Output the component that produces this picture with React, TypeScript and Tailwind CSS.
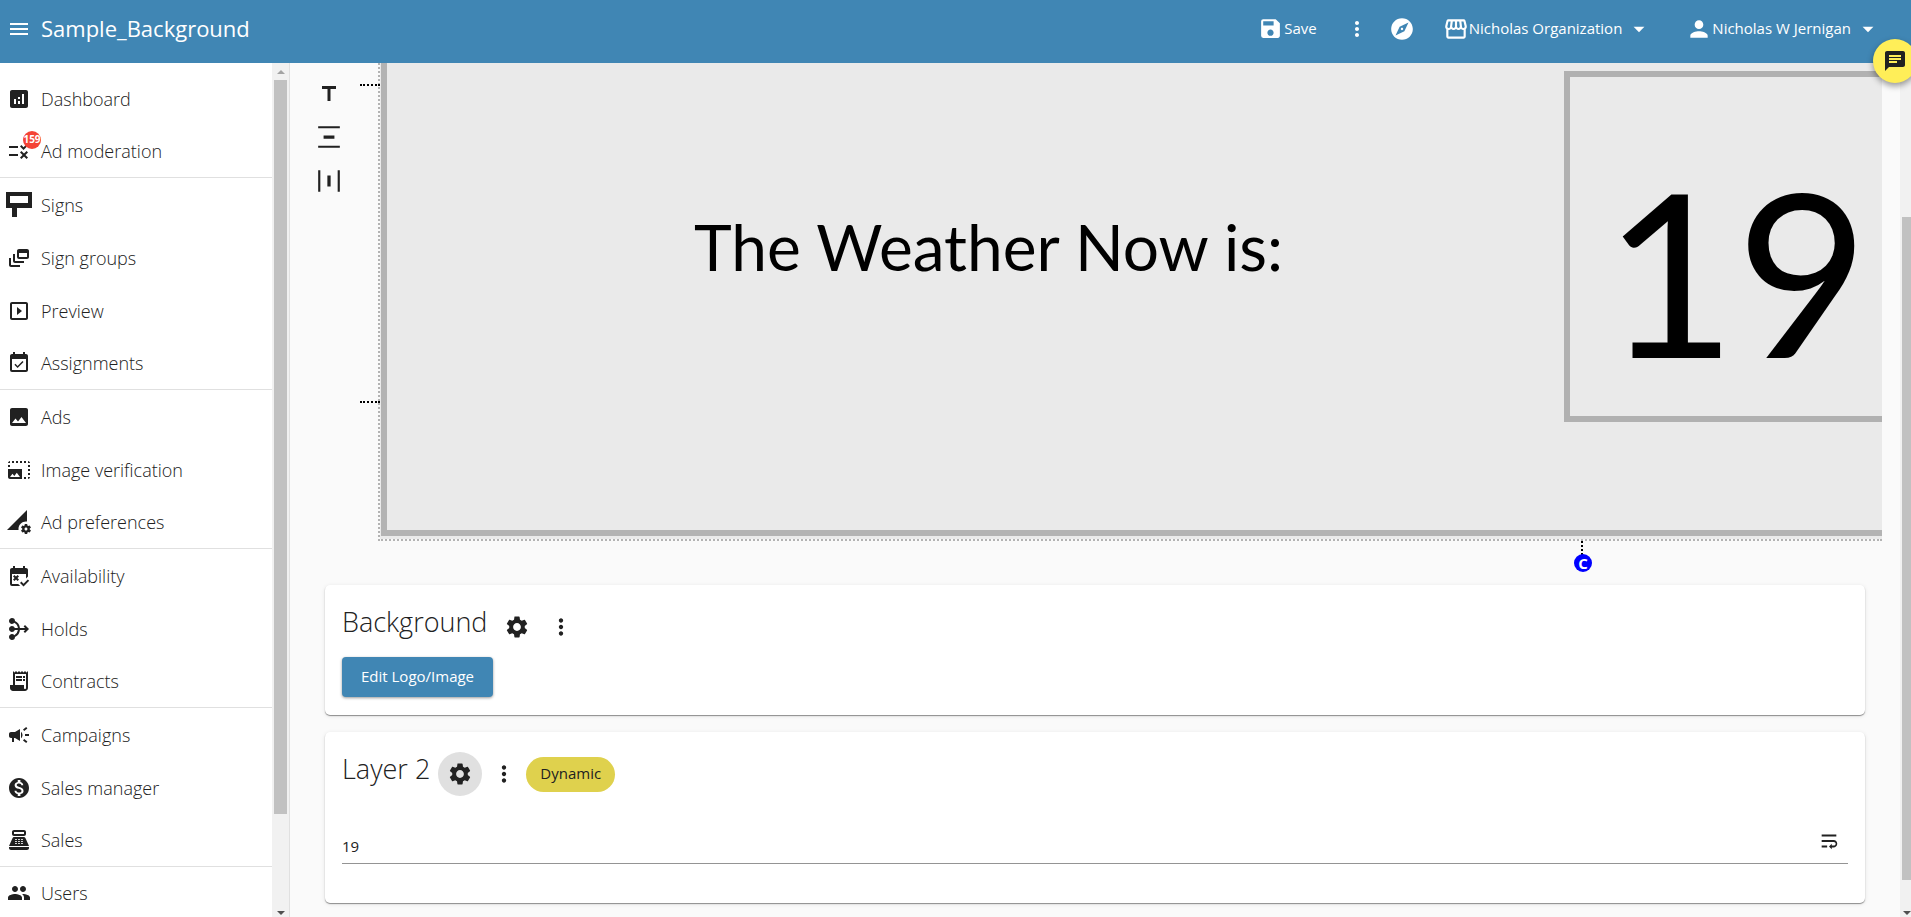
import React from "react";
import type { IconType } from "react-icons";
import {
	MdAnalytics,
	MdArrowDropDown,
	MdCampaign,
	MdChat,
	MdDynamicFeed,
	MdEventAvailable,
	MdExplore,
	MdFreeCancellation,
	MdHorizontalDistribute,
	MdImage,
	MdMediation,
	MdMenu,
	MdMonetizationOn,
	MdMoreVert,
	MdPeople,
	MdPermDataSetting,
	MdPerson,
	MdPhotoSizeSelectLarge,
	MdPointOfSale,
	MdReceiptLong,
	MdRule,
	MdSave,
	MdSettings,
	MdSlideshow,
	MdStorefront,
	MdTitle,
	MdVerticalDistribute,
	MdWrapText,
} from "react-icons/md";

interface NavItem {
	label: string;
	icon: IconType | typeof SignIcon;
	badge?: string;
}

function SignIcon({ size = 26 }: { size?: number }) {
	return (
		<svg width={size} height={size} viewBox="0 0 26 26" aria-hidden="true">
			<path d="M0 0h26v16H11v9H6v-9H0zM4 4v7h18V4z" fill="currentColor" fillRule="evenodd" />
		</svg>
	);
}

const NAV_GROUPS: NavItem[][] = [
	[
		{ label: "Dashboard", icon: MdAnalytics },
		{ label: "Ad moderation", icon: MdRule, badge: "159" },
	],
	[
		{ label: "Signs", icon: SignIcon },
		{ label: "Sign groups", icon: MdDynamicFeed },
		{ label: "Preview", icon: MdSlideshow },
		{ label: "Assignments", icon: MdEventAvailable },
	],
	[
		{ label: "Ads", icon: MdImage },
		{ label: "Image verification", icon: MdPhotoSizeSelectLarge },
		{ label: "Ad preferences", icon: MdPermDataSetting },
	],
	[
		{ label: "Availability", icon: MdFreeCancellation },
		{ label: "Holds", icon: MdMediation },
		{ label: "Contracts", icon: MdReceiptLong },
	],
	[
		{ label: "Campaigns", icon: MdCampaign },
		{ label: "Sales manager", icon: MdMonetizationOn },
		{ label: "Sales", icon: MdPointOfSale },
	],
	[{ label: "Users", icon: MdPeople }],
];

function Header() {
	return (
		<header className="flex h-[63px] shrink-0 items-center bg-[#4086b4] pr-[30px] pb-[6px] pl-[7px] text-[15px] text-white">
			<button type="button" aria-label="Menu" className="mr-[10px]">
				<MdMenu size={24} />
			</button>
			<h1 className="text-[22px]">Sample_Background</h1>
			<div className="ml-auto flex items-center">
				<button type="button" className="mr-7 flex items-center gap-px">
					<MdSave size={25} />
					Save
				</button>
				<button type="button" aria-label="More actions" className="mr-5">
					<MdMoreVert size={24} />
				</button>
				<button type="button" aria-label="Explore" className="mr-7">
					<MdExplore size={26} />
				</button>
				<button type="button" className="mr-[34px] flex items-center">
					<MdStorefront size={26} />
					Nicholas Organization
					<MdArrowDropDown size={26} className="ml-1" />
				</button>
				<button type="button" className="flex items-center">
					<MdPerson size={26} />
					Nicholas W Jernigan
					<MdArrowDropDown size={26} className="ml-1" />
				</button>
			</div>
		</header>
	);
}

function NavLink({ item }: { item: NavItem }) {
	const Icon = item.icon;
	return (
		<a
			href="#"
			className="flex h-[53px] items-center gap-[9px] border-[#e0e0e0] pl-[6px] text-lg font-light last:border-b"
		>
			<span className="relative flex w-[26px] justify-center">
				<Icon size={item.label === "Signs" ? 26 : 24} />
				{item.badge && (
					<span className="absolute -top-2 left-[17px] flex h-[18px] w-[18px] items-center justify-center rounded-full bg-[#f44336] text-[10px] font-bold text-white">
						{item.badge}
					</span>
				)}
			</span>
			{item.label}
		</a>
	);
}

function Sidebar() {
	return (
		<aside className="flex w-[290px] shrink-0 border-r border-[#e0e0e0] bg-white">
			<nav className="flex-1 overflow-hidden pt-[9px]">
				{NAV_GROUPS.map((group) => (
					<div key={group[0].label}>
						{group.map((item) => (
							<NavLink key={item.label} item={item} />
						))}
					</div>
				))}
			</nav>
			<div className="flex w-[17px] flex-col items-center bg-[#f1f1f1]">
				<span className="my-[7px] h-0 w-0 border-x-4 border-b-4 border-x-transparent border-b-[#a3a3a3]" />
				<div className="mt-[-1px] w-[13px] flex-[734] bg-[#c1c1c1]" />
				<div className="flex-[97]" />
				<span className="mb-[2px] h-0 w-0 border-x-4 border-t-4 border-x-transparent border-t-[#505050]" />
			</div>
		</aside>
	);
}

function SignCanvas() {
	return (
		<div className="flex pr-[18px]">
			<div className="flex w-[88px] flex-col items-center gap-[18px] pt-[19px] pr-[10px]">
				<button type="button" aria-label="Add text">
					<MdTitle size={24} />
				</button>
				<button type="button" aria-label="Distribute vertically">
					<MdVerticalDistribute size={26} />
				</button>
				<button type="button" aria-label="Distribute horizontally">
					<MdHorizontalDistribute size={26} />
				</button>
			</div>
			<div className="relative h-[478px] flex-1 border-b-2 border-l-2 border-dotted border-[#b3b3b3]">
				<div className="relative h-full overflow-hidden bg-[#eaeaea] pb-[3px] pl-px">
					<div className="h-full border-b-[6px] border-l-[6px] border-[#b3b3b3]" />
					<p className="absolute top-[148px] left-[314px] font-['Lato',sans-serif] text-[64px] leading-[72px] text-black">
						The Weather Now is:
					</p>
					<div className="absolute top-2 -right-10 flex h-[351px] w-[358px] items-center border-[6px] border-[#b1b1b1] pt-[46px] pl-[34px] font-['Lato',sans-serif] text-[228px] leading-none text-black">
						19
					</div>
				</div>
				{/* snap guides */}
				<span className="absolute top-[21px] -left-5 w-5 border-t-2 border-dotted border-black" />
				<span className="absolute top-[338px] -left-5 w-5 border-t-2 border-dotted border-black" />
				<span className="absolute top-[478px] right-[299px] h-[14px] border-l-2 border-dotted border-black" />
				<span className="absolute top-[491px] right-[290px] flex h-[18px] w-[18px] items-center justify-center rounded-full bg-[#0000ff] text-[15px] leading-none font-bold text-white">
					C
				</span>
			</div>
		</div>
	);
}

function LayerCard({ children }: { children: React.ReactNode }) {
	return (
		<section className="rounded-[5px] bg-white px-[17px] shadow-[0_1px_1px_rgba(0,0,0,0.4),0_1px_4px_rgba(0,0,0,0.1)]">
			{children}
		</section>
	);
}

export default function App() {
	return (
		<div className="flex h-screen flex-col overflow-hidden bg-[#fafafa] font-['Open_Sans',sans-serif] text-[#212121]">
			<Header />
			<div className="flex min-h-0 flex-1">
				<Sidebar />
				<main className="min-w-0 flex-1 overflow-hidden">
					<SignCanvas />
					<div className="mt-11 mr-[35px] ml-[35px] flex flex-col gap-[17px]">
						<LayerCard>
							<div className="flex h-[72px] items-center pt-3">
								<h2 className="mr-2 pb-[10px] text-[27px] font-light">Background</h2>
								<button
									type="button"
									aria-label="Background settings"
									className="flex h-11 w-11 items-center justify-center"
								>
									<MdSettings size={26} />
								</button>
								<button
									type="button"
									aria-label="Background actions"
									className="flex h-11 w-11 items-center justify-center"
								>
									<MdMoreVert size={26} />
								</button>
							</div>
							<button
								type="button"
								className="mb-[18px] h-10 rounded-[4px] bg-[#4086b4] px-[19px] pb-[2px] text-[15px] font-medium text-white shadow-[0_1px_3px_rgba(0,0,0,0.4)]"
							>
								Edit Logo/Image
							</button>
						</LayerCard>
						<LayerCard>
							<div className="flex h-[72px] items-center pt-3">
								<h2 className="mr-2 pb-[10px] text-[27px] font-light">Layer 2</h2>
								<button
									type="button"
									aria-label="Layer 2 settings"
									className="flex h-11 w-11 items-center justify-center rounded-full bg-[#e0e0e0]"
								>
									<MdSettings size={26} />
								</button>
								<button
									type="button"
									aria-label="Layer 2 actions"
									className="flex h-11 w-11 items-center justify-center"
								>
									<MdMoreVert size={26} />
								</button>
								<span className="flex h-[35px] items-center rounded-full bg-[#dfd14d] px-[14px] pb-[2px] text-[15px]">
									Dynamic
								</span>
							</div>
							<div className="mt-[22px] mb-[39px] flex h-[38px] border-b border-[#949494] pr-2">
								<input
									type="text"
									aria-label="Layer 2 text"
									defaultValue="19"
									className="min-w-0 flex-1 bg-transparent pt-1 text-[15px] outline-none"
								/>
								<button type="button" aria-label="Wrap text" className="pb-2">
									<MdWrapText size={22} />
								</button>
							</div>
						</LayerCard>
					</div>
				</main>
				<div className="flex w-[11px] shrink-0 flex-col items-end overflow-hidden bg-[#f1f1f1]">
					<div className="flex-[154]" />
					<div className="w-[9px] flex-[663] bg-[#c1c1c1]" />
					<div className="flex-[31]" />
					<span className="mb-[2px] h-0 w-0 border-x-4 border-t-4 border-x-transparent border-t-[#505050]" />
				</div>
			</div>
			<button
				type="button"
				aria-label="Chat"
				className="fixed top-[39px] -right-[6px] flex h-11 w-11 items-center justify-center rounded-full bg-[#ffee58] shadow-[0_3px_6px_rgba(0,0,0,0.4)]"
			>
				<MdChat size={24} />
			</button>
		</div>
	);
}
